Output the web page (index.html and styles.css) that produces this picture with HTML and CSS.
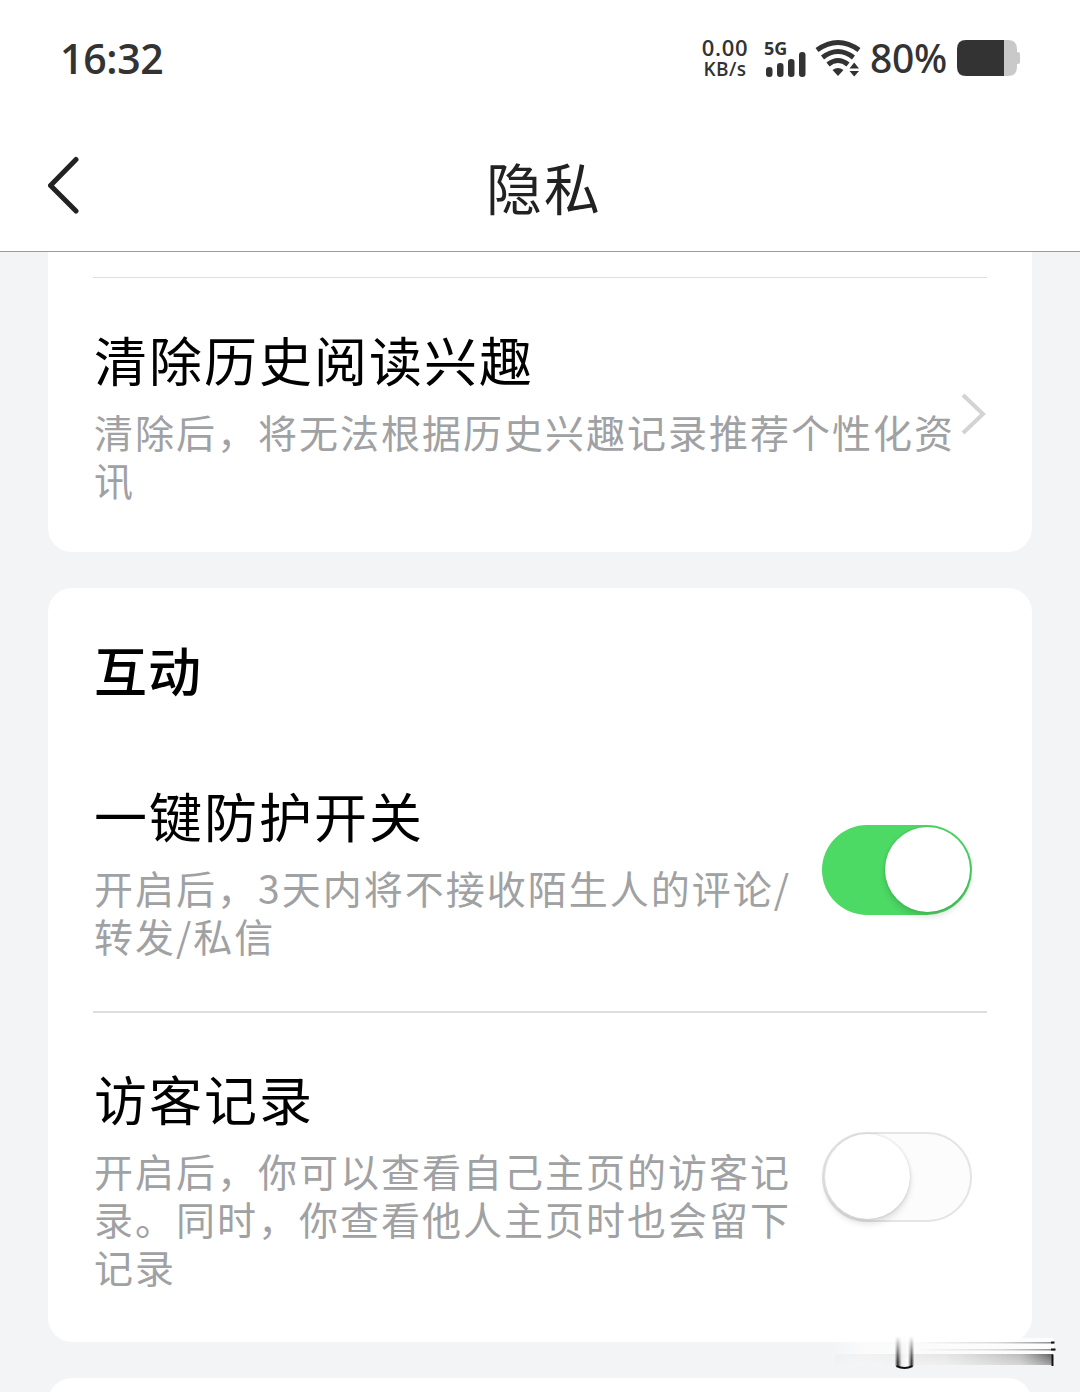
FILE: index.html
```html
<!DOCTYPE html>
<html lang="zh-CN">
<head>
<meta charset="utf-8">
<title>隐私</title>
<link rel="stylesheet" href="styles.css">
</head>
<body>
<div class="screen">
  <header class="header">
    <div class="status">
      <span class="clock">16:32</span>
      <div class="speed"><span class="speed-value">0.00</span><span class="speed-unit">KB/s</span></div>
      <div class="signal">
        <span class="network">5G</span>
        <svg class="bars" width="42" height="40" viewBox="0 0 42 40" fill="#333">
          <rect x="2" y="29" width="6.5" height="10" rx="3"/>
          <rect x="13" y="25" width="6.5" height="14" rx="3"/>
          <rect x="24" y="21" width="6.5" height="18" rx="3"/>
          <rect x="35" y="14" width="6.5" height="25" rx="3"/>
        </svg>
      </div>
      <svg class="wifi" width="46" height="40" viewBox="0 0 46 40">
        <g fill="none" stroke="#333" stroke-width="5">
          <path d="M2 12Q23 -3 44 12"/>
          <path d="M7.500 19.500Q23 7.500 38.500 19.500"/>
          <path d="M13 26.500Q23 18.500 33 26.500"/>
        </g>
        <path d="M17.500 32Q23 28 28.500 32L23 38Z M34.500 30.500L39.200 24.500L44 30.500Z M34.500 33L39.200 38.500L44 33Z" fill="#333"/>
      </svg>
      <span class="percent">80%</span>
      <svg class="battery" width="64" height="36" viewBox="0 0 64 36">
        <path d="M47 0H51Q60 0 60 9V27Q60 36 51 36H47Z M60 12Q63 12 63 14V22Q63 24 60 24Z" fill="#c9c9c9"/>
        <path d="M9 0H47V36H9Q0 36 0 27V9Q0 0 9 0Z" fill="#333"/>
      </svg>
    </div>
    <div class="nav">
      <svg class="back" width="34" height="60" viewBox="0 0 34 60" fill="none" stroke="#222" stroke-width="5" stroke-linecap="round" stroke-linejoin="round"><path d="M28 4.500L2.500 30.500L28 56"/></svg>
      <h1 class="title">隐私</h1>
      <span class="nav-space"></span>
    </div>
  </header>
  <main class="content">
    <section class="card card-history">
      <div class="divider"></div>
      <div class="row row-history">
        <div class="copy">
          <h3 class="name">清除历史阅读兴趣</h3>
          <p class="desc">清除后，将无法根据历史兴趣记录推荐个性化资<br>讯</p>
        </div>
        <svg class="chevron" width="26" height="44" viewBox="0 0 26 44" fill="none" stroke="#d3d3d3" stroke-width="4"><path d="M2 3L22 22L2 41"/></svg>
      </div>
    </section>
    <section class="card card-social">
      <h2 class="group">互动</h2>
      <div class="row row-guard">
        <div class="copy">
          <h3 class="name">一键防护开关</h3>
          <p class="desc">开启后，3天内将不接收陌生人的评论/<br>转发/私信</p>
        </div>
        <div class="toggle toggle-on"><span class="knob"></span></div>
      </div>
      <div class="divider"></div>
      <div class="row row-visitor">
        <div class="copy">
          <h3 class="name">访客记录</h3>
          <p class="desc">开启后，你可以查看自己主页的访客记<br>录。同时，你查看他人主页时也会留下<br>记录</p>
        </div>
        <div class="toggle toggle-off"><span class="knob"></span></div>
      </div>
    </section>
    <section class="card card-next"></section>
  </main>
  <svg class="smear" width="240" height="40" viewBox="0 0 240 40">
    <defs>
      <linearGradient id="haze"><stop offset="0" stop-color="#fff" stop-opacity="0"/><stop offset=".15" stop-color="#fff" stop-opacity=".6"/><stop offset="1" stop-color="#fff" stop-opacity=".8"/></linearGradient>
      <linearGradient id="line"><stop offset="0" stop-color="#888" stop-opacity="0"/><stop offset=".6" stop-color="#888" stop-opacity=".3"/><stop offset="1" stop-color="#555" stop-opacity=".7"/></linearGradient>
      <linearGradient id="band"><stop offset="0" stop-color="#777" stop-opacity=".03"/><stop offset=".5" stop-color="#777" stop-opacity=".16"/><stop offset=".85" stop-color="#555" stop-opacity=".4"/><stop offset="1" stop-color="#222" stop-opacity=".75"/></linearGradient>
      <linearGradient id="tube"><stop offset="0" stop-color="#333" stop-opacity=".1"/><stop offset=".14" stop-color="#333"/><stop offset=".35" stop-color="#eee"/><stop offset=".68" stop-color="#fff"/><stop offset=".88" stop-color="#333"/><stop offset="1" stop-color="#333" stop-opacity=".1"/></linearGradient>
      <linearGradient id="rise" x1="0" y1="0" x2="0" y2="1"><stop offset="0" stop-color="#000"/><stop offset=".65" stop-color="#fff"/></linearGradient>
      <linearGradient id="drop" x1="0" y1="0" x2="0" y2="1"><stop offset="0" stop-color="#fff"/><stop offset="1" stop-color="#888"/></linearGradient>
      <mask id="fade"><rect x="70" width="30" height="40" fill="url(#rise)"/></mask>
      <mask id="shade"><rect x="0" y="17" width="240" height="13" fill="url(#drop)"/></mask>
    </defs>
    <rect x="5" y="2" width="224" height="27" fill="url(#haze)"/>
    <rect x="90" y="6" width="139" height="1.500" fill="url(#line)"/>
    <rect x="90" y="13" width="140" height="1.500" fill="url(#line)"/>
    <rect x="10" y="18" width="218" height="11" fill="url(#band)" mask="url(#shade)"/>
    <path d="M226 6.500H229.500M226 13.500H230.500M227.500 18.500V30" stroke="#111" stroke-width="2"/>
    <path d="M70 0H89V30Q80 34 70 30Z" fill="url(#tube)" mask="url(#fade)"/>
    <path d="M71.500 30Q79.500 34 87.500 30" fill="none" stroke="#111" stroke-width="2"/>
  </svg>
</div>
</body>
</html>
```

FILE: styles.css
```css
* {
  box-sizing: border-box;
}

body,
h1,
h2,
h3,
p {
  margin: 0;
}

body {
  background: #f3f4f6;
  font-family: "Noto Sans CJK SC", sans-serif;
}

.screen {
  position: relative;
  display: flex;
  flex-direction: column;
  width: 1080px;
  height: 1392px;
  overflow: hidden;
}

.header {
  height: 252px;
  flex: none;
  background: #fff;
  border-bottom: 1px solid #9b9b9b;
}

.status {
  display: flex;
  align-items: center;
  height: 116px;
  padding: 0 59px 0 60px;
  color: #333;
  font-family: "Open Sans", sans-serif;
  white-space: nowrap;
}

.clock {
  flex: none;
  width: 641px;
  font-size: 41px;
  font-weight: 600;
  line-height: 60px;
  letter-spacing: -.3px;
}

.speed {
  display: flex;
  flex: none;
  flex-direction: column;
  align-items: center;
  width: 48px;
  font-weight: 600;
  line-height: 22px;
}

.speed-value {
  font-size: 22px;
  letter-spacing: .7px;
}

.speed-unit {
  font-size: 19px;
  letter-spacing: .4px;
}

.signal {
  display: grid;
  flex: none;
  width: 42px;
  height: 40px;
  margin-left: 15px;
}

.network,
.bars {
  grid-area: 1 / 1;
}

.network {
  font-size: 18px;
  font-weight: 700;
  line-height: 20px;
}

.wifi {
  flex: none;
  margin-left: 9px;
}

.percent {
  flex: none;
  width: 86px;
  padding-left: 9px;
  font-family: "Noto Sans", sans-serif;
  font-size: 39px;
  font-weight: 500;
  line-height: 60px;
  letter-spacing: -.3px;
}

.battery {
  flex: none;
  margin-left: 10px;
}

.nav {
  display: flex;
  align-items: center;
  justify-content: space-between;
  height: 135px;
  padding: 5px 43px 0 48px;
}

.back {
  margin-top: -2px;
}

.title {
  color: #222;
  font-size: 56px;
  font-weight: 400;
  line-height: 70px;
  letter-spacing: 2px;
}

.nav-space {
  width: 31px;
}

.content {
  display: flex;
  flex-direction: column;
  gap: 36px;
  padding: 0 48px;
}

.card {
  flex: none;
  padding: 0 45px;
  background: #fff;
  border-radius: 24px;
}

.card-history {
  height: 300px;
  padding-top: 25px;
  border-radius: 0 0 24px 24px;
}

.card-social {
  height: 754px;
  padding-top: 51px;
}

.card-next {
  height: 60px;
}

.divider {
  height: 1px;
  background: #dedede;
}

.card-social .divider {
  height: 2px;
}

.row {
  display: flex;
  justify-content: space-between;
}

.row-history {
  padding-top: 51px;
}

.row-guard {
  height: 312px;
  padding-top: 86px;
}

.row-visitor {
  padding-top: 55px;
}

.copy {
  flex: none;
  padding-left: 1px;
  white-space: nowrap;
}

.group {
  padding-left: 1px;
  font-size: 53px;
  font-weight: 500;
  line-height: 60px;
  letter-spacing: 1px;
}

.name {
  font-size: 53px;
  font-weight: 400;
  line-height: 60px;
  letter-spacing: 2px;
}

.desc {
  margin-top: 18px;
  color: #a0a1a3;
  font-size: 39px;
  line-height: 48px;
  letter-spacing: 2px;
}

.chevron {
  flex: none;
  margin-top: 63px;
}

.toggle {
  flex: none;
  width: 150px;
  height: 90px;
  margin-right: 15px;
  border-radius: 45px;
}

.toggle-on {
  margin-top: 40px;
  padding: 2px 2px 0 63px;
  background: #4cd964;
}

.toggle-off {
  margin-top: 64px;
  padding: 0 0 0 1px;
  border: 2px solid #e5e5e5;
  background: #fcfcfc;
}

.knob {
  display: block;
  width: 85px;
  height: 85px;
  border-radius: 50%;
  background: #fff;
  box-shadow: 0 5px 6px rgba(0, 0, 0, .12), 0 0 3px rgba(0, 0, 0, .16);
}

.smear {
  position: absolute;
  left: 825px;
  top: 1336px;
}
```
